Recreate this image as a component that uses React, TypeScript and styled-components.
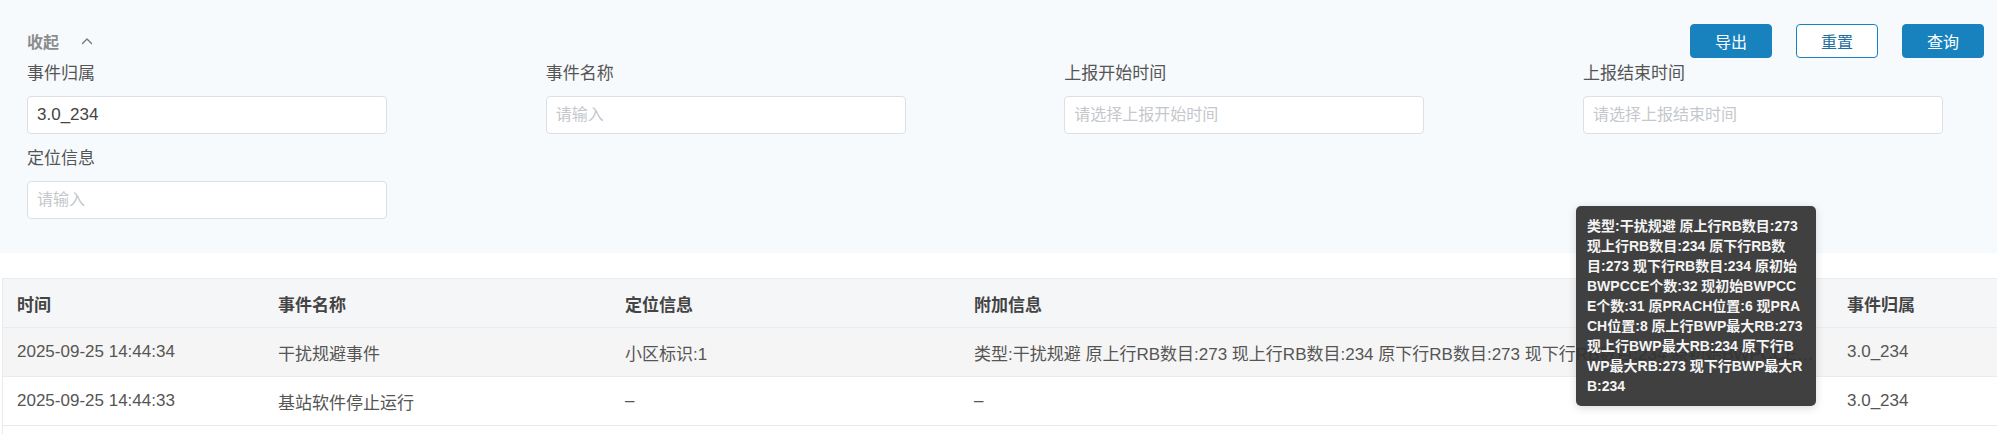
import React from 'react';
import styled, { createGlobalStyle } from 'styled-components';

const GlobalStyle = createGlobalStyle`
  html, body { margin: 0; padding: 0; background: #ffffff; }
  body { font-family: "Liberation Sans", "Noto Sans CJK SC", sans-serif; color: #555; }
  * { box-sizing: border-box; }
`;

const Page = styled.div`
  position: relative;
  width: 1997px;
`;

const FilterPanel = styled.section`
  background: #f6fafd;
  height: 253px;
  padding: 24px 13px 0 27px;
`;

const PanelHeader = styled.div`
  display: flex;
  align-items: center;
  justify-content: space-between;
  height: 34px;
`;

const Collapse = styled.div`
  display: flex;
  align-items: center;
  gap: 22px;
  font-size: 16px;
  font-weight: bold;
  color: #8c8c8c;
  cursor: pointer;
`;

const Actions = styled.div`
  display: flex;
  gap: 24px;
`;

const Button = styled.button<{ $outline?: boolean }>`
  width: 82px;
  height: 34px;
  border-radius: 4px;
  font-family: inherit;
  font-size: 16px;
  border: 1px solid #1782be;
  background: ${(p) => (p.$outline ? '#ffffff' : '#1782be')};
  color: ${(p) => (p.$outline ? '#1f6f9e' : '#ffffff')};
  cursor: pointer;
`;

const FieldGrid = styled.div`
  margin-top: 5px;
  display: grid;
  grid-template-columns: repeat(4, 360px);
  column-gap: 158.67px;
  row-gap: 14px;
`;

const Field = styled.div`
  display: flex;
  flex-direction: column;
  gap: 11px;
`;

const Label = styled.label`
  font-size: 17px;
  line-height: 22px;
  color: #555;
`;

const Input = styled.input`
  height: 38px;
  width: 100%;
  border: 1px solid #dcdfe6;
  border-radius: 4px;
  background: #ffffff;
  padding: 0 9px;
  font-family: inherit;
  font-size: 17px;
  color: #444;
  outline: none;
  &::placeholder {
    color: #c4c7cc;
    font-size: 16px;
  }
`;

const TableWrap = styled.div`
  margin: 25px 0 0 2px;
  border-left: 1px solid #e9ebef;
  min-height: 160px;
`;

const Table = styled.table`
  width: 1995px;
  table-layout: fixed;
  border-collapse: collapse;
  border-top: 1px solid #e9ebef;
`;

const Col = styled.col<{ $w: number }>`
  width: ${(p) => p.$w}px;
`;

const HeadCell = styled.th`
  height: 49px;
  padding: 0 14px;
  text-align: left;
  font-size: 17px;
  font-weight: bold;
  color: #444;
  background: #f5f6f8;
  border-bottom: 1px solid #e9ebef;
`;

const Row = styled.tr<{ $hover?: boolean }>`
  background: ${(p) => (p.$hover ? '#f5f5f5' : '#ffffff')};
`;

const Cell = styled.td`
  height: 49px;
  padding: 0 14px;
  font-size: 17px;
  color: #555;
  border-bottom: 1px solid #e9ebef;
  white-space: nowrap;
  overflow: hidden;
  text-overflow: ellipsis;
`;

const Tooltip = styled.div`
  position: absolute;
  left: 1576px;
  top: 206px;
  width: 240px;
  padding: 10px 11px;
  background: rgba(50, 50, 50, 0.93);
  color: #f4f4f4;
  border-radius: 5px;
  font-size: 14px;
  font-weight: bold;
  line-height: 20px;
  box-shadow: 0 2px 8px rgba(0, 0, 0, 0.15);
`;

const TipLine = styled.span`
  display: block;
  white-space: nowrap;
`;

const fields = [
  { label: '事件归属', value: '3.0_234', placeholder: '请输入' },
  { label: '事件名称', value: '', placeholder: '请输入' },
  { label: '上报开始时间', value: '', placeholder: '请选择上报开始时间' },
  { label: '上报结束时间', value: '', placeholder: '请选择上报结束时间' },
  { label: '定位信息', value: '', placeholder: '请输入' },
];

const extra =
  '类型:干扰规避 原上行RB数目:273 现上行RB数目:234 原下行RB数目:273 现下行RB数目:234 原初始BWPCCE个数:32 现初始BWPCCE个数:31 原PRACH位置:6 现PRACH位置:8 原上行BWP最大RB:273 现上行BWP最大RB:234 原下行BWP最大RB:273 现下行BWP最大RB:234';

const tipLines = [
  '类型:干扰规避 原上行RB数目:273',
  '现上行RB数目:234 原下行RB数',
  '目:273 现下行RB数目:234 原初始',
  'BWPCCE个数:32 现初始BWPCC',
  'E个数:31 原PRACH位置:6 现PRA',
  'CH位置:8 原上行BWP最大RB:273',
  '现上行BWP最大RB:234 原下行B',
  'WP最大RB:273 现下行BWP最大R',
  'B:234',
];

const rows = [
  { time: '2025-09-25 14:44:34', name: '干扰规避事件', loc: '小区标识:1', extra, owner: '3.0_234', hover: true },
  { time: '2025-09-25 14:44:33', name: '基站软件停止运行', loc: '–', extra: '–', owner: '3.0_234', hover: false },
];

const Chevron = () => (
  <svg width="12" height="8" viewBox="0 0 12 8" fill="none">
    <polyline points="1.5,6.5 6,2 10.5,6.5" stroke="#777" strokeWidth="1.4" strokeLinecap="round" strokeLinejoin="round" />
  </svg>
);

export default function App() {
  return (
    <Page>
      <GlobalStyle />
      <FilterPanel>
        <PanelHeader>
          <Collapse>
            <span>收起</span>
            <Chevron />
          </Collapse>
          <Actions>
            <Button>导出</Button>
            <Button $outline>重置</Button>
            <Button>查询</Button>
          </Actions>
        </PanelHeader>
        <FieldGrid>
          {fields.map((f) => (
            <Field key={f.label}>
              <Label>{f.label}</Label>
              <Input defaultValue={f.value} placeholder={f.placeholder} />
            </Field>
          ))}
        </FieldGrid>
      </FilterPanel>
      <TableWrap>
        <Table>
          <colgroup>
            <Col $w={261} />
            <Col $w={347} />
            <Col $w={349} />
            <Col $w={873} />
            <Col $w={165} />
          </colgroup>
          <thead>
            <tr>
              <HeadCell>时间</HeadCell>
              <HeadCell>事件名称</HeadCell>
              <HeadCell>定位信息</HeadCell>
              <HeadCell>附加信息</HeadCell>
              <HeadCell>事件归属</HeadCell>
            </tr>
          </thead>
          <tbody>
            {rows.map((r) => (
              <Row key={r.time} $hover={r.hover}>
                <Cell>{r.time}</Cell>
                <Cell>{r.name}</Cell>
                <Cell>{r.loc}</Cell>
                <Cell>{r.extra}</Cell>
                <Cell>{r.owner}</Cell>
              </Row>
            ))}
          </tbody>
        </Table>
      </TableWrap>
      <Tooltip>
        {tipLines.map((l) => (
          <TipLine key={l}>{l}</TipLine>
        ))}
      </Tooltip>
    </Page>
  );
}
